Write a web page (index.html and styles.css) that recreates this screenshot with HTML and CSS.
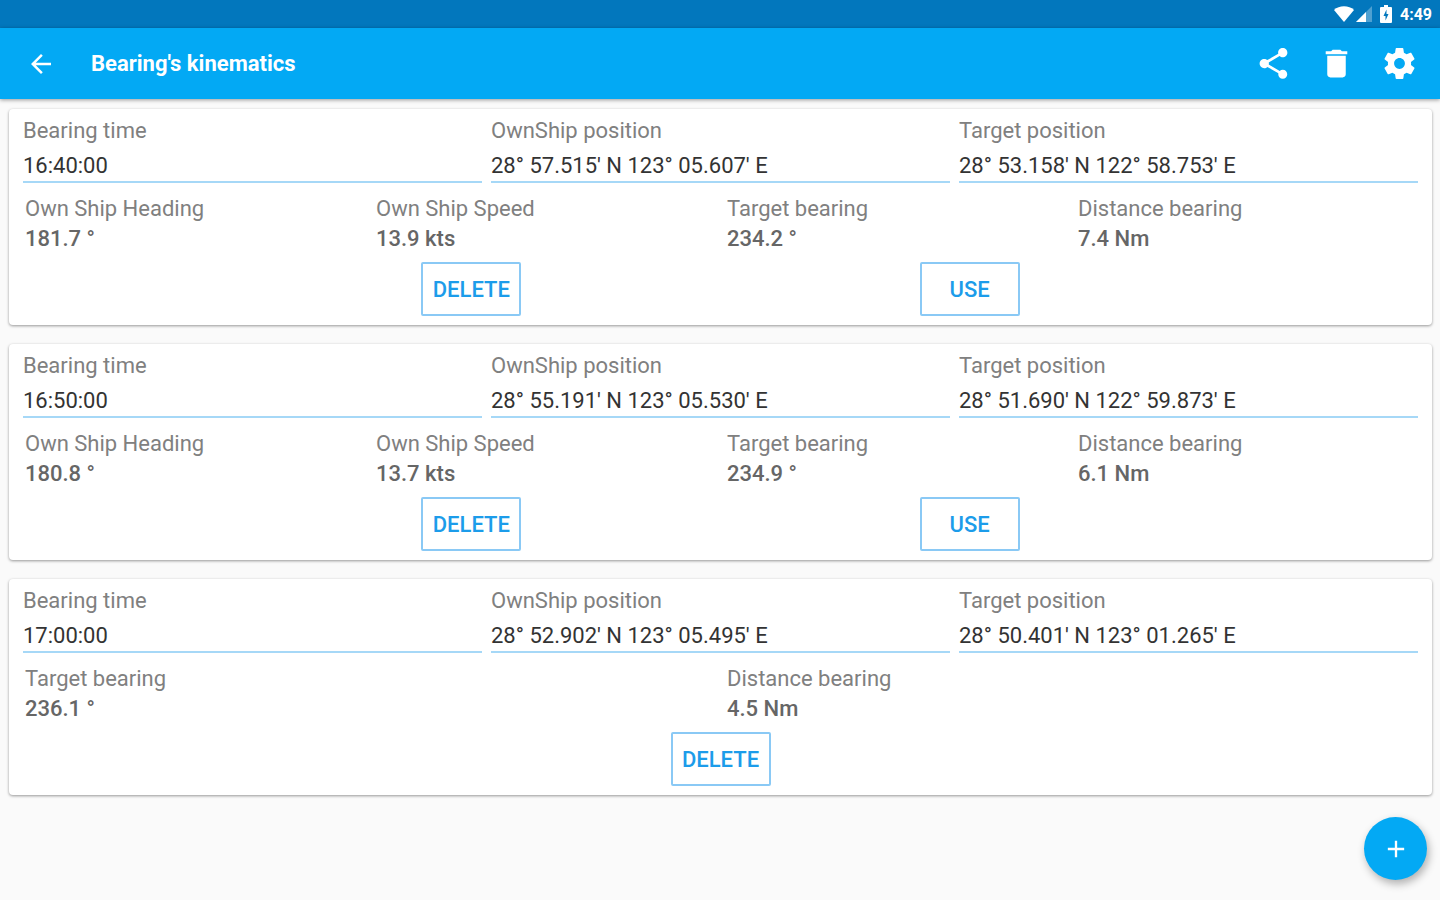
FILE: index.html
```html
<!DOCTYPE html>
<html lang="en">
<head>
  <meta charset="UTF-8">
  <meta name="viewport" content="width=device-width, initial-scale=1.0">
  <title>Bearing's kinematics</title>
  <link rel="stylesheet" href="styles.css">
</head>
<body>
  <div class="status-bar">
    <svg class="wifi" viewBox="0 0 20 16"><path d="M10 16 L0 4 C5 -1 15 -1 20 4 Z"/></svg>
    <svg class="signal" viewBox="0 0 16 16"><path class="faint" d="M0 16 L16 0 V16 Z"/><path d="M0 16 L10 6 V16 Z"/></svg>
    <svg class="battery" viewBox="0 0 12 18"><path fill-rule="evenodd" d="M4 0 H8 V2 H11 Q12 2 12 3 V17 Q12 18 11 18 H1 Q0 18 0 17 V3 Q0 2 1 2 H4 Z M6.500 4.500 L3.500 11 H5.500 V15.500 L8.500 9 H6.500 Z"/></svg>
    <span>4:49</span>
  </div>
  <header class="toolbar">
    <button class="back" aria-label="Back">
      <svg viewBox="0 0 24 24"><path d="M20 11H7.83l5.59-5.59L12 4l-8 8 8 8 1.41-1.41L7.83 13H20v-2z"/></svg>
    </button>
    <h1>Bearing's kinematics</h1>
    <button class="action" aria-label="Share">
      <svg viewBox="0 0 24 24"><path d="M18 16.08c-.76 0-1.44.3-1.96.77L8.91 12.7c.05-.23.09-.46.09-.7s-.04-.47-.09-.7l7.05-4.11c.54.5 1.25.81 2.04.81 1.66 0 3-1.34 3-3s-1.34-3-3-3-3 1.34-3 3c0 .24.04.47.09.7L8.04 9.81C7.5 9.31 6.79 9 6 9c-1.66 0-3 1.34-3 3s1.34 3 3 3c.79 0 1.5-.31 2.04-.81l7.12 4.16c-.05.21-.08.43-.08.65 0 1.61 1.31 2.92 2.92 2.92s2.92-1.31 2.92-2.92-1.31-2.92-2.92-2.92z"/></svg>
    </button>
    <button class="action" aria-label="Delete all">
      <svg viewBox="0 0 24 24"><path d="M6 19c0 1.1.9 2 2 2h8c1.1 0 2-.9 2-2V7H6v12zM19 4h-3.500l-1-1h-5l-1 1H5v2h14V4z"/></svg>
    </button>
    <button class="action" aria-label="Settings">
      <svg viewBox="0 0 24 24"><path d="M19.430 12.980c.04-.32.07-.64.07-.98s-.03-.66-.07-.98l2.110-1.650c.19-.15.24-.42.12-.64l-2-3.460c-.12-.22-.39-.3-.61-.22l-2.490 1c-.52-.4-1.080-.73-1.690-.98l-.38-2.650C14.460 2.180 14.250 2 14 2h-4c-.25 0-.46.18-.49.42l-.38 2.650c-.61.25-1.170.59-1.690.98l-2.490-1c-.23-.09-.49 0-.61.22l-2 3.460c-.13.22-.07.49.12.64l2.110 1.650c-.04.32-.07.65-.07.98s.03.66.07.98l-2.110 1.650c-.19.15-.24.42-.12.64l2 3.460c.12.22.39.3.61.22l2.490-1c.52.4 1.080.73 1.690.98l.38 2.650c.03.24.24.42.49.42h4c.25 0 .46-.18.49-.42l.38-2.650c.61-.25 1.170-.59 1.690-.98l2.490 1c.23.09.49 0 .61-.22l2-3.460c.12-.22.07-.49-.12-.64l-2.110-1.650zM12 15.500c-1.930 0-3.500-1.570-3.500-3.500s1.570-3.500 3.500-3.500 3.500 1.570 3.500 3.500-1.570 3.500-3.500 3.500z"/></svg>
    </button>
  </header>

  <main class="cards">
    <section class="card">
      <div class="fields">
        <div class="field">
          <label for="time1">Bearing time</label>
          <input id="time1" type="text" value="16:40:00">
        </div>
        <div class="field">
          <label for="own1">OwnShip position</label>
          <input id="own1" type="text" value="28° 57.515' N 123° 05.607' E">
        </div>
        <div class="field">
          <label for="target1">Target position</label>
          <input id="target1" type="text" value="28° 53.158' N 122° 58.753' E">
        </div>
      </div>
      <dl class="values">
        <div><dt>Own Ship Heading</dt><dd>181.7 °</dd></div>
        <div><dt>Own Ship Speed</dt><dd>13.9 kts</dd></div>
        <div><dt>Target bearing</dt><dd>234.2 °</dd></div>
        <div><dt>Distance bearing</dt><dd>7.4 Nm</dd></div>
      </dl>
      <div class="buttons">
        <button>DELETE</button>
        <button>USE</button>
      </div>
    </section>

    <section class="card">
      <div class="fields">
        <div class="field">
          <label for="time2">Bearing time</label>
          <input id="time2" type="text" value="16:50:00">
        </div>
        <div class="field">
          <label for="own2">OwnShip position</label>
          <input id="own2" type="text" value="28° 55.191' N 123° 05.530' E">
        </div>
        <div class="field">
          <label for="target2">Target position</label>
          <input id="target2" type="text" value="28° 51.690' N 122° 59.873' E">
        </div>
      </div>
      <dl class="values">
        <div><dt>Own Ship Heading</dt><dd>180.8 °</dd></div>
        <div><dt>Own Ship Speed</dt><dd>13.7 kts</dd></div>
        <div><dt>Target bearing</dt><dd>234.9 °</dd></div>
        <div><dt>Distance bearing</dt><dd>6.1 Nm</dd></div>
      </dl>
      <div class="buttons">
        <button>DELETE</button>
        <button>USE</button>
      </div>
    </section>

    <section class="card">
      <div class="fields">
        <div class="field">
          <label for="time3">Bearing time</label>
          <input id="time3" type="text" value="17:00:00">
        </div>
        <div class="field">
          <label for="own3">OwnShip position</label>
          <input id="own3" type="text" value="28° 52.902' N 123° 05.495' E">
        </div>
        <div class="field">
          <label for="target3">Target position</label>
          <input id="target3" type="text" value="28° 50.401' N 123° 01.265' E">
        </div>
      </div>
      <dl class="values">
        <div><dt>Target bearing</dt><dd>236.1 °</dd></div>
        <div><dt>Distance bearing</dt><dd>4.5 Nm</dd></div>
      </dl>
      <div class="buttons">
        <button>DELETE</button>
      </div>
    </section>
  </main>

  <button class="fab" aria-label="Add bearing">
    <svg viewBox="0 0 24 24"><path d="M19 13h-6v6h-2v-6H5v-2h6V5h2v6h6v2z"/></svg>
  </button>
</body>
</html>
```
FILE: styles.css
```css
*{
  box-sizing: border-box;
  font-family: Roboto, sans-serif;
}
body{
  margin: 0;
  background: #fafafa;
  font-size: 22px;
}
button{
  border: 0;
  padding: 0;
  background: none;
  cursor: pointer;
}
svg{
  display: block;
  fill: #fff;
}
.status-bar{
  height: 28px;
  padding-right: 8px;
  background: #0277bd;
  color: #fff;
  display: flex;
  align-items: center;
  justify-content: flex-end;
  font-size: 16px;
  font-weight: 700;
}
.wifi{
  width: 20px;
  height: 16px;
}
.signal{
  width: 16px;
  height: 16px;
  margin-left: 2px;
}
.signal .faint{
  opacity: 0.3;
}
.battery{
  width: 12px;
  height: 18px;
  margin: 0 8px;
}
.toolbar{
  height: 71px;
  padding: 0 9px;
  background: #03a9f4;
  box-shadow: 0 1px 4px rgba(0, 0, 0, 0.4);
  display: flex;
  align-items: center;
}
.back{
  padding: 0 17px;
}
.back svg{
  width: 30px;
  height: 30px;
}
h1{
  flex: 1;
  margin: 0;
  padding-left: 18px;
  color: #fff;
  font-size: 22px;
  line-height: 28px;
  font-weight: 700;
}
.action{
  padding: 0 13px;
}
.action svg{
  width: 37px;
  height: 37px;
}
.cards{
  padding: 10px 8px 10px 9px;
  display: flex;
  flex-direction: column;
  gap: 19px;
}
.card{
  padding: 8px 14px 9px;
  background: #fff;
  border-radius: 4px;
  box-shadow: 0 1px 3px rgba(0, 0, 0, 0.4);
}
.fields, .values{
  display: flex;
  gap: 9px;
}
.field, .values div{
  flex: 1;
  min-width: 0;
}
label{
  display: block;
  line-height: 28px;
  color: #808080;
}
input{
  display: block;
  width: 100%;
  height: 38px;
  padding: 4px 0 0;
  border: 0;
  border-bottom: 2px solid #a6d8f7;
  background: none;
  color: #333;
  font-size: 22px;
}
.values{
  margin: 11px 0 8px;
}
.values div{
  padding-left: 2px;
}
dt{
  line-height: 30px;
  color: #808080;
}
dd{
  margin: 0;
  line-height: 30px;
  color: #666;
  font-weight: 500;
}
.buttons{
  display: flex;
  justify-content: space-evenly;
}
.buttons button{
  width: 100px;
  height: 54px;
  border: 2px solid #8ac9f5;
  border-radius: 2px;
  color: #1c9cea;
  font-size: 22px;
  font-weight: 500;
}
.fab{
  position: fixed;
  right: 13px;
  bottom: 20px;
  width: 63px;
  height: 63px;
  border-radius: 50%;
  background: #03a9f4;
  box-shadow: 2px 4px 8px rgba(0, 0, 0, 0.3);
  display: flex;
  align-items: center;
  justify-content: center;
}
.fab svg{
  width: 28px;
  height: 28px;
}
```
